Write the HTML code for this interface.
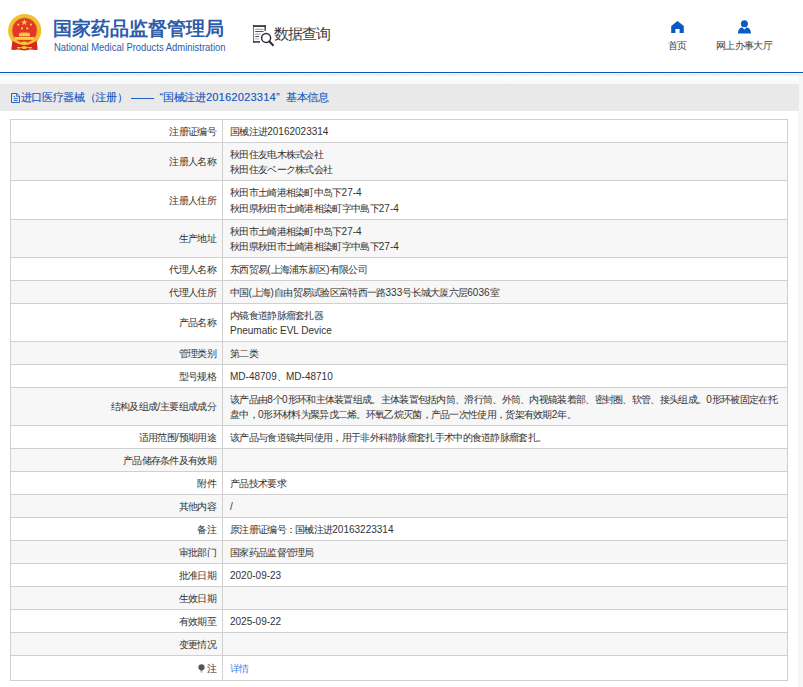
<!DOCTYPE html>
<html><head><meta charset="utf-8">
<style>
html,body{margin:0;padding:0;}
body{width:803px;height:687px;overflow:hidden;position:relative;background:#f6f6f6;font-family:"Liberation Sans",sans-serif;color:#333;}
i{font-style:normal;letter-spacing:0;}
.lab>div,.val>div{position:relative;top:0.6px;}
.hdr{position:absolute;left:0;top:0;width:803px;height:72px;background:#fff;}
.bline{position:absolute;left:0;top:72px;width:803px;height:1px;background:#0a56c2;}
.hatch{position:absolute;left:0;top:74px;width:803px;height:2px;
 background-image:repeating-linear-gradient(45deg,#fff 0px,#fff 1.3px,#e2e2e2 1.3px,#e2e2e2 2.1px);}
.panel{position:absolute;left:0;top:76px;width:798px;height:611px;background:#fff;}
.grad{position:absolute;left:0;top:78px;width:799px;height:6px;background:linear-gradient(#fff,#f7f7f7);}
.bar{position:absolute;left:0;top:84px;width:799px;height:27px;background:#e9e9e9;}
.bt{position:absolute;top:89px;font-size:10.67px;line-height:16px;color:#1d5cc2;white-space:nowrap;letter-spacing:-0.3px;text-shadow:0.3px 0 0 rgba(29,92,194,0.45);}
.title{position:absolute;left:53px;top:17px;font-size:19px;line-height:24px;font-weight:bold;color:#2c5caa;white-space:nowrap;}
.eng{position:absolute;left:54px;top:42px;font-size:10px;line-height:12px;color:#2c5caa;white-space:nowrap;transform:scaleX(0.944);transform-origin:0 0;}
.sq{position:absolute;left:274px;top:22.5px;font-size:15px;line-height:22px;color:#3a3a3a;white-space:nowrap;letter-spacing:-1px;}
.nav{position:absolute;font-size:10px;line-height:12px;color:#444;white-space:nowrap;letter-spacing:-0.7px;}
.tbl{position:absolute;left:10px;top:119px;width:778px;height:562.00px;}
.bg{position:absolute;left:0;width:778px;background:#f7f7f7;}
.row{position:absolute;left:0;width:778px;}
.hl{position:absolute;left:0;width:778px;height:1px;background:#d0d0d0;}
.vl{position:absolute;top:0;width:1px;height:100%;background:#d0d0d0;}
.lab{position:absolute;left:0;width:206px;top:0;bottom:0;display:flex;align-items:center;justify-content:flex-end;font-size:10px;line-height:15.2px;color:#333;white-space:nowrap;letter-spacing:-0.7px;}
.val{position:absolute;left:220px;right:0;top:0;bottom:0;display:flex;align-items:center;font-size:10px;line-height:15.2px;color:#333;white-space:nowrap;letter-spacing:-0.7px;}
.lnk{color:#3a86ea;}
</style></head><body>
<div class="hdr"></div>
<svg style="position:absolute;left:0;top:0" width="60" height="60" viewBox="0 0 60 60">
 <circle cx="24.7" cy="30.5" r="16.6" fill="#f2c02e"/>
 <circle cx="24.6" cy="30.4" r="12.6" fill="#e6352a" stroke="#e0a526" stroke-width="0.7"/>
 <path d="M12.6 40 Q24.5 48.5 36.6 40 L37.7 49.4 Q35 50.6 31.5 49.6 L24.5 50.6 L17.5 49.6 Q14 50.6 11.3 49.4 Z" fill="#d9281d"/>
 <path d="M12.4 39.6 Q24.5 48.8 36.6 39.6" fill="none" stroke="#f5cb33" stroke-width="1.4"/>
 <ellipse cx="24.3" cy="42.6" rx="2.6" ry="1.2" fill="#f5cb33"/>
 <ellipse cx="24.3" cy="47.4" rx="2.6" ry="1.5" fill="#f3cf3a"/>
 <path d="M17 47.6 L32 47.6" stroke="#f3cf3a" stroke-width="0.9"/>
 <path d="M18 47 L19 50 L20 47.5 Z M31 47 L30 50 L29 47.5 Z" fill="#f3cf3a"/>
 <polygon points="24.3,19 25.1,21.4 27.6,21.4 25.6,22.9 26.4,25.3 24.3,23.8 22.2,25.3 23,22.9 21,21.4 23.5,21.4" fill="#f7d53a"/>
 <circle cx="18.3" cy="24.6" r="1.1" fill="#f7d53a"/><circle cx="31" cy="24.6" r="1.1" fill="#f7d53a"/>
 <circle cx="22" cy="28.4" r="1.1" fill="#f7d53a"/><circle cx="27.3" cy="28.4" r="1.1" fill="#f7d53a"/>
 <rect x="19" y="33.3" width="10.9" height="3" fill="#f6d03c"/>
 <rect x="20.5" y="32.6" width="8" height="1" fill="#f6d03c"/>
 <rect x="15" y="37" width="19" height="2.8" fill="#f7d640"/>
</svg>
<div class="title">国家药品监督管理局</div>
<div class="eng">National Medical Products Administration</div>
<svg style="position:absolute;left:248px;top:20px" width="30" height="30" viewBox="0 0 30 30">
 <rect x="5" y="5.2" width="1.1" height="17.4" fill="#77777f"/>
 <rect x="5" y="5.2" width="12.7" height="1.7" fill="#2d2d3d"/>
 <rect x="16.5" y="5.2" width="1.3" height="5.7" fill="#2d2d3d"/>
 <rect x="5" y="21.2" width="7" height="1.5" fill="#2d2d3d"/>
 <rect x="7.2" y="8.8" width="8.3" height="1" fill="#9a9aa2"/>
 <rect x="7.2" y="11.1" width="8.3" height="0.9" fill="#3d3d4a"/>
 <rect x="7.2" y="13.6" width="5.3" height="1" fill="#9a9aa2"/>
 <rect x="7.2" y="16.0" width="3.8" height="0.9" fill="#3d3d4a"/>
 <rect x="7.2" y="18.4" width="3.8" height="1" fill="#b0b0b8"/>
 <circle cx="18.1" cy="17.9" r="4.5" fill="none" stroke="#2d2d3d" stroke-width="1.5"/>
 <path d="M21.4 21.4 L24.8 24.9" stroke="#2d2d3d" stroke-width="2.1" stroke-linecap="square"/>
</svg>
<div class="sq">数据查询</div>
<svg style="position:absolute;left:671px;top:21px" width="13" height="12" viewBox="0 0 13 12">
 <path d="M6.5 0 L12.8 5 L12.8 12 L8.6 12 L8.6 8 L4.4 8 L4.4 12 L0.2 12 L0.2 5 Z" fill="#0a5bc4"/>
</svg>
<div class="nav" style="left:668px;top:40px">首页</div>
<svg style="position:absolute;left:737px;top:20px" width="15" height="14" viewBox="0 0 15 14">
 <circle cx="7.4" cy="3.8" r="3.5" fill="#0a5bc4"/>
 <path d="M0.9 13.4 Q1.1 8.2 5 7.3 L7.4 9.4 L9.8 7.3 Q13.8 8.2 14 13.4 Z" fill="#0a5bc4"/>
</svg>
<div class="nav" style="left:716px;top:40px">网上办事大厅</div>
<div class="bline"></div>
<svg style="position:absolute;left:0;top:74px" width="803" height="2"><defs><pattern id="hp" width="3" height="2" patternUnits="userSpaceOnUse"><rect x="2" y="0" width="1" height="1" fill="#dedede"/><rect x="1" y="1" width="1" height="1" fill="#e9e9e9"/></pattern></defs><rect width="803" height="2" fill="url(#hp)"/></svg>
<div class="panel"></div>
<div class="grad"></div>
<div class="bar"></div>
<svg style="position:absolute;left:11px;top:93px" width="9" height="10" viewBox="0 0 9 10">
 <path d="M0.5 0.5 H5.9 L8.5 3.1 V9.5 H0.5 Z" fill="none" stroke="#2463c6" stroke-width="1"/>
 <path d="M5.6 1 V3.3 H8" fill="none" stroke="#2463c6" stroke-width="0.9"/>
 <rect x="2.7" y="2.9" width="1.3" height="1.1" fill="#2463c6"/>
 <rect x="2.7" y="5" width="4.1" height="0.9" fill="#2463c6"/><rect x="2.7" y="7.1" width="4.1" height="0.9" fill="#2463c6"/>
</svg>
<div class="bt" style="left:20.5px">进口医疗器械（注册）</div>
<div style="position:absolute;left:131px;top:98px;width:23px;height:1px;background:#1f5fc3"></div>
<div class="bt" style="left:159.5px"><i>“</i>国械注进<i style="font-size:11px;letter-spacing:0.25px">20162023314”</i></div>
<div class="bt" style="left:286px">基本信息</div>
<div class="tbl">
<div class="bg" style="top:24px;height:37px"></div>
<div class="bg" style="top:101px;height:37px"></div>
<div class="bg" style="top:162px;height:22px"></div>
<div class="bg" style="top:223px;height:22px"></div>
<div class="bg" style="top:269px;height:37px"></div>
<div class="bg" style="top:330px;height:22px"></div>
<div class="bg" style="top:376px;height:22px"></div>
<div class="bg" style="top:422px;height:22px"></div>
<div class="bg" style="top:468px;height:22px"></div>
<div class="bg" style="top:514px;height:22px"></div>
<div class="row" style="top:1px;height:22px"><div class="lab"><div>注册证编号</div></div><div class="val"><div>国械注进<i>20162023314</i></div></div></div>
<div class="row" style="top:24px;height:37px"><div class="lab"><div>注册人名称</div></div><div class="val"><div>秋田住友电木株式会社<br>秋田住友ベーク株式会社</div></div></div>
<div class="row" style="top:62px;height:38px"><div class="lab"><div>注册人住所</div></div><div class="val"><div>秋田市土崎港相染町中岛下<i>27-4</i><br>秋田県秋田市土崎港相染町字中島下<i>27-4</i></div></div></div>
<div class="row" style="top:101px;height:37px"><div class="lab"><div>生产地址</div></div><div class="val"><div>秋田市土崎港相染町中岛下<i>27-4</i><br>秋田県秋田市土崎港相染町字中島下<i>27-4</i></div></div></div>
<div class="row" style="top:139px;height:22px"><div class="lab"><div>代理人名称</div></div><div class="val"><div>东西贸易<i>(</i>上海浦东新区<i>)</i>有限公司</div></div></div>
<div class="row" style="top:162px;height:22px"><div class="lab"><div>代理人住所</div></div><div class="val"><div>中国<i>(</i>上海<i>)</i>自由贸易试验区富特西一路<i>333</i>号长城大厦六层<i>6036</i>室</div></div></div>
<div class="row" style="top:185px;height:37px"><div class="lab"><div>产品名称</div></div><div class="val"><div>内镜食道静脉瘤套扎器<br><i>Pneumatic EVL Device</i></div></div></div>
<div class="row" style="top:223px;height:22px"><div class="lab"><div>管理类别</div></div><div class="val"><div>第二类</div></div></div>
<div class="row" style="top:246px;height:22px"><div class="lab"><div>型号规格</div></div><div class="val"><div><i>MD-48709</i>、<i>MD-48710</i></div></div></div>
<div class="row" style="top:269px;height:37px"><div class="lab"><div>结构及组成<i>/</i>主要组成成分</div></div><div class="val"><div>该产品由<i>8</i>个<i>0</i>形环和主体装置组成。主体装置包括内筒、滑行筒、外筒、内视镜装着部、密封圈、软管、接头组成。<i>0</i>形环被固定在托<br>盘中，<i>0</i>形环材料为聚异戊二烯。环氧乙烷灭菌，产品一次性使用，货架有效期<i>2</i>年。</div></div></div>
<div class="row" style="top:307px;height:22px"><div class="lab"><div>适用范围<i>/</i>预期用途</div></div><div class="val"><div>该产品与食道镜共同使用，用于非外科静脉瘤套扎手术中的食道静脉瘤套扎。</div></div></div>
<div class="row" style="top:330px;height:22px"><div class="lab"><div>产品储存条件及有效期</div></div><div class="val"><div></div></div></div>
<div class="row" style="top:353px;height:22px"><div class="lab"><div>附件</div></div><div class="val"><div>产品技术要求</div></div></div>
<div class="row" style="top:376px;height:22px"><div class="lab"><div>其他内容</div></div><div class="val"><div><i>/</i></div></div></div>
<div class="row" style="top:399px;height:22px"><div class="lab"><div>备注</div></div><div class="val"><div>原注册证编号：国械注进<i>20163223314</i></div></div></div>
<div class="row" style="top:422px;height:22px"><div class="lab"><div>审批部门</div></div><div class="val"><div>国家药品监督管理局</div></div></div>
<div class="row" style="top:445px;height:22px"><div class="lab"><div>批准日期</div></div><div class="val"><div><i>2020-09-23</i></div></div></div>
<div class="row" style="top:468px;height:22px"><div class="lab"><div>生效日期</div></div><div class="val"><div></div></div></div>
<div class="row" style="top:491px;height:22px"><div class="lab"><div>有效期至</div></div><div class="val"><div><i>2025-09-22</i></div></div></div>
<div class="row" style="top:514px;height:22px"><div class="lab"><div>变更情况</div></div><div class="val"><div></div></div></div>
<div class="row" style="top:537px;height:24px"><div class="lab"><div><svg width="7" height="9" viewBox="0 0 7 9" style="margin-right:2px;vertical-align:-1px"><circle cx="3.5" cy="3.3" r="3.1" fill="#555"/><rect x="2.3" y="6.3" width="2.4" height="1" fill="#888"/><rect x="2.5" y="7.6" width="2" height="0.9" fill="#999"/></svg>注</div></div><div class="val"><div><span class="lnk">详情</span></div></div></div>
<div class="hl" style="top:0px"></div>
<div class="hl" style="top:23px"></div>
<div class="hl" style="top:61px"></div>
<div class="hl" style="top:100px"></div>
<div class="hl" style="top:138px"></div>
<div class="hl" style="top:161px"></div>
<div class="hl" style="top:184px"></div>
<div class="hl" style="top:222px"></div>
<div class="hl" style="top:245px"></div>
<div class="hl" style="top:268px"></div>
<div class="hl" style="top:306px"></div>
<div class="hl" style="top:329px"></div>
<div class="hl" style="top:352px"></div>
<div class="hl" style="top:375px"></div>
<div class="hl" style="top:398px"></div>
<div class="hl" style="top:421px"></div>
<div class="hl" style="top:444px"></div>
<div class="hl" style="top:467px"></div>
<div class="hl" style="top:490px"></div>
<div class="hl" style="top:513px"></div>
<div class="hl" style="top:536px"></div>
<div class="hl" style="top:561px"></div>
<div class="vl" style="left:0"></div>
<div class="vl" style="left:212px"></div>
<div class="vl" style="left:777px"></div>
</div>
</body></html>
